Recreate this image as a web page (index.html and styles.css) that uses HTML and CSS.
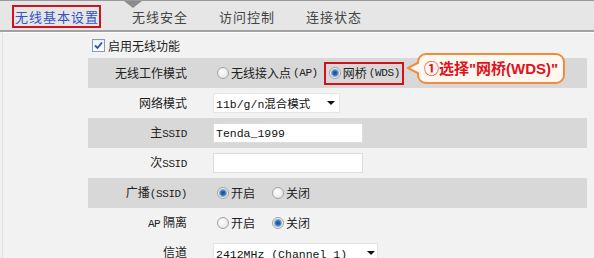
FILE: index.html
```html
<!DOCTYPE html>
<html lang="zh-CN">
<head>
    <meta charset="UTF-8">
    <meta name="viewport" content="width=device-width, initial-scale=1.0">
    <title>无线基本设置</title>
    <link rel="stylesheet" href="styles.css">
</head>
<body>
    <div class="tabbar">
        <span class="notch"></span>
        <ul class="tabs">
            <li class="tab active">无线基本设置</li>
            <li class="tab">无线安全</li>
            <li class="tab">访问控制</li>
            <li class="tab">连接状态</li>
        </ul>
    </div>

    <div class="content">
        <div class="enable-row">
            <label class="enable">
                <span class="check">
                    <svg width="9" height="9" viewBox="0 0 9 9"><path d="M1 4.5 L3.5 7 L8 1.5" fill="none" stroke="#2d4fa8" stroke-width="1.8"/></svg>
                </span>
                启用无线功能
            </label>
        </div>

        <div class="row shaded mode-row">
            <div class="label">无线工作模式</div>
            <div class="field">
                <label class="opt"><span class="radio"></span>无线接入点<span class="latin">(AP)</span></label>
                <label class="opt marked"><span class="radio on"></span>网桥<span class="latin">(WDS)</span></label>
            </div>
            <div class="callout">①选择"网桥(WDS)"</div>
        </div>

        <div class="row">
            <div class="label">网络模式</div>
            <div class="field">
                <div class="select mode-select">
                    <select>
                        <option>11b/g/n混合模式</option>
                    </select>
                </div>
            </div>
        </div>

        <div class="row shaded">
            <div class="label">主<span class="latin">SSID</span></div>
            <div class="field"><input type="text" class="text-input" value="Tenda_1999"></div>
        </div>

        <div class="row">
            <div class="label">次<span class="latin">SSID</span></div>
            <div class="field"><input type="text" class="text-input" value=""></div>
        </div>

        <div class="row shaded">
            <div class="label">广播<span class="latin">(SSID)</span></div>
            <div class="field">
                <label class="opt"><span class="radio on"></span>开启</label>
                <label class="opt"><span class="radio"></span>关闭</label>
            </div>
        </div>

        <div class="row">
            <div class="label"><span class="latin">AP</span> 隔离</div>
            <div class="field">
                <label class="opt"><span class="radio"></span>开启</label>
                <label class="opt"><span class="radio on"></span>关闭</label>
            </div>
        </div>

        <div class="row last-row">
            <div class="label">信道</div>
            <div class="field">
                <div class="select channel-select">
                    <select>
                        <option>2412MHz (Channel 1)</option>
                    </select>
                </div>
            </div>
        </div>
    </div>
</body>
</html>
```

FILE: styles.css
```css
* {
    margin: 0;
    padding: 0;
    box-sizing: border-box;
}

body {
    background-color: #f2f2f2;
    font-family: "Noto Sans CJK SC", "Liberation Sans", sans-serif;
    font-size: 12px;
    color: #222;
    overflow: hidden;
}

/* tab bar */
.tabbar {
    position: relative;
    height: 32px;
    background: #e6e6e6;
    border-top: 1px solid #9a9a9a;
    border-bottom: 2px solid #a2a2a2;
}

.notch {
    position: absolute;
    left: 124px;
    top: 0;
    border-left: 9px solid transparent;
    border-right: 9px solid transparent;
    border-top: 7px solid #8c8c8c;
}

.tabs {
    list-style: none;
    display: flex;
    align-items: center;
    gap: 31px;
    height: 29px;
    padding: 1px 0 0 12px;
}

.tab {
    font-size: 13px;
    letter-spacing: 1px;
    line-height: 19px;
    color: #444;
}

.tab.active {
    color: #3450c8;
    border: 2px solid #d0121c;
    padding-left: 1px;
}

/* form area */
.content {
    margin-left: 2px;
    border-left: 1px solid #e2e2e2;
    border-top: 1px solid #fff;
    padding-left: 85px;
}

.enable-row {
    height: 25px;
    display: flex;
    align-items: center;
    padding-left: 4px;
}

.enable {
    display: flex;
    align-items: center;
    gap: 3px;
    line-height: 14px;
}

.check {
    width: 13px;
    height: 13px;
    border: 1px solid #7f9db9;
    background: linear-gradient(#eef2f8, #fff);
    display: flex;
    align-items: center;
    justify-content: center;
}

.row {
    position: relative;
    width: 499px;
    height: 30px;
    display: grid;
    grid-template-columns: 99px 1fr;
    column-gap: 26px;
    align-items: center;
}

.shaded {
    background: #d8d8d8;
}

.label {
    text-align: right;
    line-height: 14px;
}

.last-row .label {
    margin-bottom: 3px;
}

.latin {
    font-family: "Liberation Mono", monospace;
    font-size: 11px;
    letter-spacing: -0.4px;
}

.field {
    display: flex;
    align-items: center;
}

.opt {
    display: flex;
    align-items: center;
    gap: 2px;
    line-height: 14px;
    margin-left: 4px;
    margin-right: 13px;
}

.mode-row .opt {
    margin-right: 0;
}

.mode-row .opt.marked {
    margin-left: 6px;
    border: 2px solid #d0121c;
    height: 23px;
    padding: 0 2px 0 3px;
}

.radio {
    width: 12px;
    height: 12px;
    border-radius: 50%;
    border: 1px solid #a4a4a4;
    background: radial-gradient(circle at 40% 40%, #fff, #dcdcdc);
}

.radio.on {
    background: radial-gradient(circle, #0e4a86 0, #2c6cb0 2px, #7fa9d6 3.5px, #eef2f6 4.5px, #dcdcdc 6px);
}

/* callout */
.callout {
    position: absolute;
    left: 329px;
    top: -5px;
    width: 148px;
    height: 31px;
    border: 2px solid #f08a3c;
    border-radius: 9px;
    background: #fff8f1;
    color: #e0121c;
    font-family: "Liberation Sans", "Noto Sans CJK SC", sans-serif;
    font-weight: bold;
    font-size: 15px;
    line-height: 27px;
    text-align: center;
}

.callout::before {
    content: "";
    position: absolute;
    left: -13px;
    top: 6px;
    border-top: 7px solid transparent;
    border-bottom: 7px solid transparent;
    border-right: 13px solid #f08a3c;
}

.callout::after {
    content: "";
    position: absolute;
    left: -9px;
    top: 8px;
    border-top: 5px solid transparent;
    border-bottom: 5px solid transparent;
    border-right: 10px solid #fff8f1;
}

/* inputs */
.select {
    position: relative;
    height: 20px;
    background: #fff;
    border: 1px solid #e4e4e4;
}

.select select {
    appearance: none;
    -webkit-appearance: none;
    width: 100%;
    height: 18px;
    border: none;
    background: transparent;
    padding-left: 2px;
    font-family: "Liberation Mono", "Noto Sans CJK SC", monospace;
    font-size: 11.5px;
    color: #111;
}

.select::after {
    content: "";
    position: absolute;
    right: 4px;
    top: 7px;
    border-left: 4px solid transparent;
    border-right: 4px solid transparent;
    border-top: 4px solid #111;
}

.mode-select {
    width: 127px;
}

.channel-select {
    width: 165px;
}

.channel-select::after {
    right: 2px;
}

.text-input {
    width: 150px;
    height: 20px;
    border: 1px solid #dcdcdc;
    background: #fff;
    padding: 0 2px;
    font-family: "Liberation Mono", monospace;
    font-size: 11.5px;
    color: #111;
}
```
